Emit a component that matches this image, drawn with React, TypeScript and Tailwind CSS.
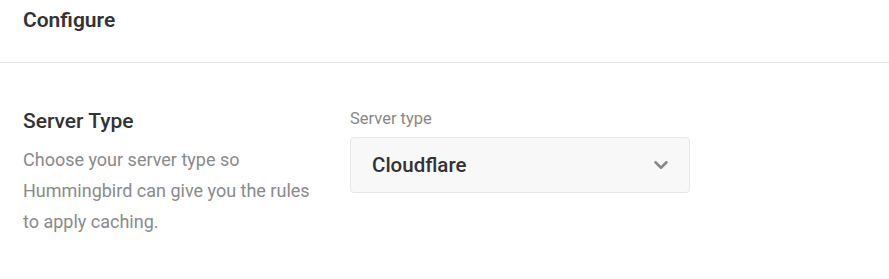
import { ChevronDown } from "lucide-react";

export default function App() {
  return (
    <div className="w-[889px] h-[279px] bg-white font-['Roboto',sans-serif] overflow-hidden">
      <div className="h-[63px] border-b border-[#e6e6e6] px-[23px] pt-[8px]">
        <h2 className="text-[21px] leading-6 font-semibold text-[#333]">Configure</h2>
      </div>
      <div className="flex pl-[23px] pt-[46px]">
        <div className="w-[327px] shrink-0">
          <h3 className="text-[21px] leading-6 font-medium text-[#333]">Server Type</h3>
          <p className="mt-[11px] w-[292px] text-[18px] leading-[31px] text-[#8a8a8a]">
            Choose your server type so Hummingbird can give you the rules to apply caching.
          </p>
        </div>
        <div>
          <label className="block text-[16.5px] leading-5 text-[#888]">Server type</label>
          <button className="mt-[8px] w-[340px] h-[56px] flex items-center justify-between pl-[21px] pr-[17px] bg-[#f8f8f8] border border-[#e6e6e6] rounded-[4px]">
            <span className="text-[20.5px] font-medium text-[#333]">Cloudflare</span>
            <ChevronDown size={22} strokeWidth={2.75} className="text-[#888]" />
          </button>
        </div>
      </div>
    </div>
  );
}
